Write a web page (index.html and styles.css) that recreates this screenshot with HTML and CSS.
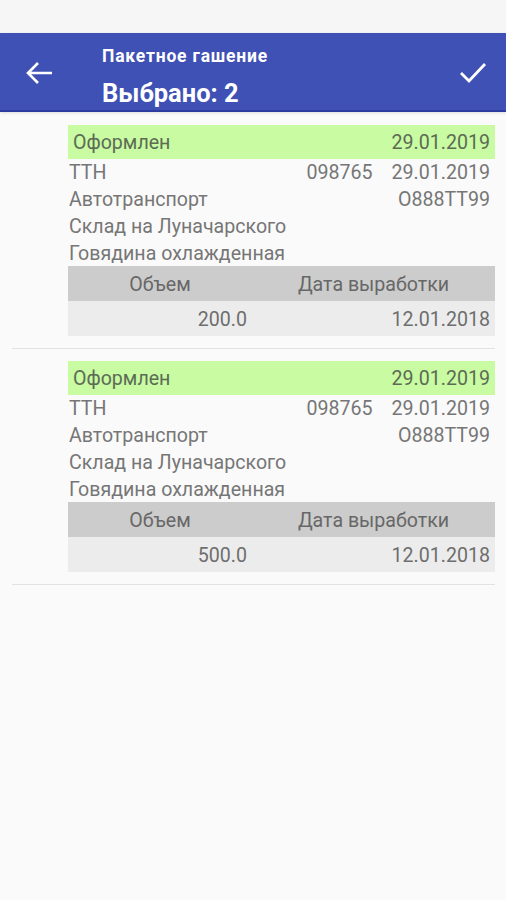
FILE: index.html
```html
<!DOCTYPE html>
<html lang="ru">
<head>
<meta charset="utf-8">
<link rel="stylesheet" href="styles.css">
</head>
<body>
<div class="statusbar"></div>
<header class="toolbar">
  <svg class="icon back" viewBox="0 0 28 24" width="28" height="24">
    <path d="M2 12H26M12 2L2 12L12 22" fill="none" stroke="#fff" stroke-width="2.6" stroke-linecap="butt" stroke-linejoin="miter"/>
  </svg>
  <div class="titles">
    <div class="title-small">Пакетное гашение</div>
    <div class="title-big">Выбрано: 2</div>
  </div>
  <svg class="icon check" viewBox="0 0 28 22" width="28" height="22">
    <path d="M2 11L10 19L26 2" fill="none" stroke="#fff" stroke-width="2.8"/>
  </svg>
</header>
<main class="list">
  <section class="item">
    <div class="status"><span>Оформлен</span><span>29.01.2019</span></div>
    <div class="row"><span>ТТН</span><span class="pair"><span>098765</span><span>29.01.2019</span></span></div>
    <div class="row"><span>Автотранспорт</span><span>О888ТТ99</span></div>
    <div class="row"><span>Склад на Луначарского</span></div>
    <div class="row"><span>Говядина охлажденная</span></div>
    <div class="table">
      <div class="th">Объем</div><div class="th">Дата выработки</div>
      <div class="td">200.0</div><div class="td">12.01.2018</div>
    </div>
  </section>
  <section class="item">
    <div class="status"><span>Оформлен</span><span>29.01.2019</span></div>
    <div class="row"><span>ТТН</span><span class="pair"><span>098765</span><span>29.01.2019</span></span></div>
    <div class="row"><span>Автотранспорт</span><span>О888ТТ99</span></div>
    <div class="row"><span>Склад на Луначарского</span></div>
    <div class="row"><span>Говядина охлажденная</span></div>
    <div class="table">
      <div class="th">Объем</div><div class="th">Дата выработки</div>
      <div class="td">500.0</div><div class="td">12.01.2018</div>
    </div>
  </section>
</main>
</body>
</html>
```
FILE: styles.css
```css
* { box-sizing: border-box; }
html, body { margin: 0; padding: 0; }
body {
  width: 506px;
  height: 900px;
  background: #fafafa;
  font-family: Roboto, "Noto Sans", sans-serif;
  overflow: hidden;
}
.statusbar {
  height: 33px;
  background: #f6f6f6;
}
.toolbar {
  height: 79px;
  background: #3f51b5;
  border-bottom: 2px solid #2b3b9e;
  display: flex;
  align-items: center;
  color: #fff;
  box-shadow: 0 1px 3px rgba(0,0,0,0.12);
}
.icon { display: block; flex: none; }
.back { margin-left: 26px; margin-top: 2px; }
.titles {
  margin-left: 48px;
  flex: 1;
  align-self: flex-start;
  display: flex;
  flex-direction: column;
  padding-top: 12px;
}
.title-small {
  font-size: 17.5px;
  font-weight: 700;
  line-height: 22px;
  letter-spacing: 0.8px;
}
.title-big {
  font-size: 25.5px;
  font-weight: 700;
  line-height: 34px;
  margin-top: 9px;
}
.check { margin-right: 19px; margin-top: 2px; }
.list { padding-top: 0; }
.item {
  margin: 0 11px 0 12px;
  padding: 13px 0 12px 56px;
  border-bottom: 1px solid #e2e2e2;
}
.item + .item { padding-top: 12px; }
.status {
  height: 34px;
  background: #c8fba2;
  display: flex;
  justify-content: space-between;
  align-items: center;
  padding: 1px 5px 0 5px;
  font-size: 19.6px;
  color: #5d6b55;
}
.row {
  height: 26.75px;
  display: flex;
  justify-content: space-between;
  align-items: center;
  padding: 1px 5px 0 1px;
  font-size: 19.6px;
  color: #767676;
}
.pair { display: flex; gap: 19px; }
.table {
  display: grid;
  grid-template-columns: 184px 1fr;
  font-size: 19.6px;
}
.th {
  height: 35px;
  background: #cccccc;
  color: #676767;
  display: flex;
  align-items: center;
  justify-content: center;
  padding-top: 1px;
}
.td {
  height: 35px;
  background: #ececec;
  color: #6e6e6e;
  display: flex;
  align-items: center;
  justify-content: flex-end;
  padding: 1px 5px 0 0;
}
.td:first-of-type { padding-right: 6px; }
```
